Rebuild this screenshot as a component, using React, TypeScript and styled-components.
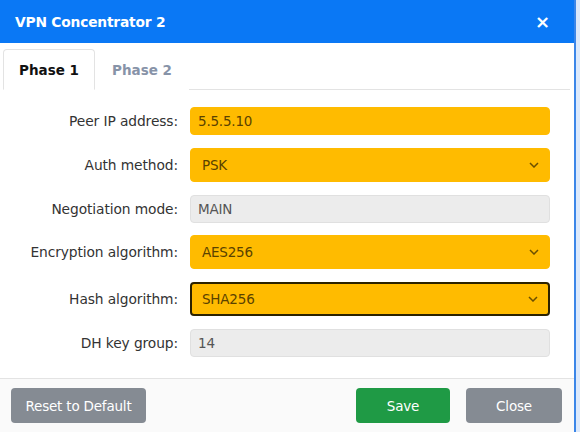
import React from "react";
import styled, { createGlobalStyle } from "styled-components";

const Global = createGlobalStyle`
  html, body { margin: 0; padding: 0; }
  body {
    width: 580px; height: 432px; overflow: hidden;
    background: linear-gradient(to right, #ffffff 0, #ffffff 576px, #dce9fb 576px);
    font-family: "DejaVu Sans", Verdana, sans-serif;
  }
`;

const Dialog = styled.div`
  width: 574px;
  height: 432px;
  background: #fff;
  border-right: 2px solid #3b86e8;
  display: flex;
  flex-direction: column;
  box-sizing: content-box;
`;

const Header = styled.div`
  height: 43px;
  flex-shrink: 0;
  background: #0a78f5;
  display: flex;
  align-items: center;
  justify-content: space-between;
  padding: 0 24px 0 15px;
  color: #fff;
`;

const Title = styled.div`
  font-size: 13.8px;
  font-weight: bold;
  letter-spacing: -0.2px;
`;

const CloseX = styled.div`
  font-size: 18px;
  font-weight: bold;
  line-height: 1;
`;

const Body = styled.div`
  flex: 1;
  padding: 6px 4px 0 3px;
  display: flex;
  flex-direction: column;
`;

const Tabs = styled.div`
  display: flex;
  border-bottom: 1px solid #e3e3e3;
  height: 40px;
`;

const Tab = styled.div<{ $active?: boolean }>`
  width: ${(p) => (p.$active ? "90px" : "92px")};
  display: flex;
  align-items: center;
  justify-content: center;
  font-size: 13.5px;
  font-weight: bold;
  color: ${(p) => (p.$active ? "#111" : "#8793a8")};
  border: 1px solid ${(p) => (p.$active ? "#e3e3e3" : "transparent")};
  border-bottom: ${(p) => (p.$active ? "1px solid #fff" : "none")};
  border-radius: 4px 4px 0 0;
  margin-bottom: -1px;
  background: #fff;
`;

const Form = styled.div`
  display: flex;
  flex-direction: column;
  gap: 12.8px;
  padding: 17px 20px 0 0;
`;

const Row = styled.div`
  display: grid;
  grid-template-columns: 175px 1fr;
  column-gap: 12px;
  align-items: center;
`;

const Label = styled.div`
  text-align: right;
  font-size: 13.8px;
  color: #333;
  letter-spacing: -0.1px;
  white-space: nowrap;
`;

const Field = styled.div<{ $kind: "text" | "select" | "disabled"; $focus?: boolean }>`
  height: ${(p) => (p.$kind === "select" ? "34px" : "28px")};
  box-sizing: border-box;
  border-radius: 4px;
  display: flex;
  align-items: center;
  justify-content: space-between;
  padding: 0 10px 0 ${(p) => (p.$kind === "select" ? "11px" : "7px")};
  font-size: 13.5px;
  letter-spacing: -0.2px;
  color: ${(p) => (p.$kind === "disabled" ? "#555" : "#5a4200")};
  background: ${(p) => (p.$kind === "disabled" ? "#ececec" : "#ffbb00")};
  border: 1px solid
    ${(p) => (p.$focus ? "#2b2200" : p.$kind === "disabled" ? "#e0e0e0" : "#ffbb00")};
  ${(p) => (p.$focus ? "border-width: 2px; padding-left: 10px;" : "")}
`;

const Chevron = () => (
  <svg width="10" height="6" viewBox="0 0 10 6">
    <path d="M1 1 L5 5 L9 1" fill="none" stroke="#6b4f00" strokeWidth="1.5" />
  </svg>
);

const Footer = styled.div`
  height: 54px;
  flex-shrink: 0;
  box-sizing: border-box;
  border-top: 1px solid #e3e3e3;
  background: #fafafa;
  display: flex;
  align-items: flex-start;
  padding: 9px 12px 0 11px;
  gap: 16px;
`;

const Button = styled.button<{ $variant: "gray" | "green"; $w: number }>`
  width: ${(p) => p.$w}px;
  height: 35px;
  border: none;
  border-radius: 4px;
  font-family: "DejaVu Sans", Verdana, sans-serif;
  font-size: 13.5px;
  letter-spacing: -0.2px;
  color: #fff;
  background: ${(p) => (p.$variant === "green" ? "#1f9a45" : "#858b93")};
  padding: 0;
`;

const Spacer = styled.div`
  flex: 1;
`;

const rows: { label: string; value: string; kind: "text" | "select" | "disabled"; focus?: boolean }[] = [
  { label: "Peer IP address:", value: "5.5.5.10", kind: "text" },
  { label: "Auth method:", value: "PSK", kind: "select" },
  { label: "Negotiation mode:", value: "MAIN", kind: "disabled" },
  { label: "Encryption algorithm:", value: "AES256", kind: "select" },
  { label: "Hash algorithm:", value: "SHA256", kind: "select", focus: true },
  { label: "DH key group:", value: "14", kind: "disabled" },
];

export default function App() {
  return (
    <>
      <Global />
      <Dialog>
        <Header>
          <Title>VPN Concentrator 2</Title>
          <CloseX>×</CloseX>
        </Header>
        <Body>
          <Tabs>
            <Tab $active>Phase 1</Tab>
            <Tab>Phase 2</Tab>
          </Tabs>
          <Form>
            {rows.map((r) => (
              <Row key={r.label}>
                <Label>{r.label}</Label>
                <Field $kind={r.kind} $focus={r.focus}>
                  <span>{r.value}</span>
                  {r.kind === "select" && <Chevron />}
                </Field>
              </Row>
            ))}
          </Form>
        </Body>
        <Footer>
          <Button $variant="gray" $w={135}>Reset to Default</Button>
          <Spacer />
          <Button $variant="green" $w={94}>Save</Button>
          <Button $variant="gray" $w={96}>Close</Button>
        </Footer>
      </Dialog>
    </>
  );
}
